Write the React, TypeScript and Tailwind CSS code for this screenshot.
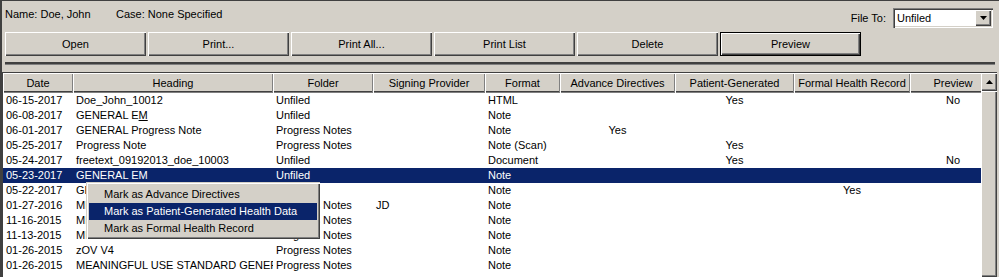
const cols = [
  { label: "Date", cls: "w-[70px]", center: false },
  { label: "Heading", cls: "w-[200px]", center: false },
  { label: "Folder", cls: "w-[100px]", center: false },
  { label: "Signing Provider", cls: "w-[112px]", center: false },
  { label: "Format", cls: "w-[75px]", center: false },
  { label: "Advance Directives", cls: "w-[115px]", center: true },
  { label: "Patient-Generated", cls: "w-[119px]", center: true },
  { label: "Formal Health Record", cls: "w-[116px]", center: true },
  { label: "Preview", cls: "w-[86px]", center: true },
];

const MU = "MEANINGFUL USE STANDARD GENERA";

const rows: string[][] = [
  ["06-15-2017", "Doe_John_10012", "Unfiled", "", "HTML", "", "Yes", "", "No"],
  ["06-08-2017", "GENERAL EM*", "Unfiled", "", "Note", "", "", "", ""],
  ["06-01-2017", "GENERAL Progress Note", "Progress Notes", "", "Note", "Yes", "", "", ""],
  ["05-25-2017", "Progress Note", "Progress Notes", "", "Note (Scan)", "", "Yes", "", ""],
  ["05-24-2017", "freetext_09192013_doe_10003", "Unfiled", "", "Document", "", "Yes", "", "No"],
  ["05-23-2017", "GENERAL EM", "Unfiled", "", "Note", "", "", "", ""],
  ["05-22-2017", "GENERAL EM", "Unfiled", "", "Note", "", "", "Yes", ""],
  ["01-27-2016", MU, "Progress Notes", "JD", "Note", "", "", "", ""],
  ["11-16-2015", MU, "Progress Notes", "", "Note", "", "", "", ""],
  ["11-13-2015", MU, "Progress Notes", "", "Note", "", "", "", ""],
  ["01-26-2015", "zOV V4", "Progress Notes", "", "Note", "", "", "", ""],
  ["01-26-2015", MU, "Progress Notes", "", "Note", "", "", "", ""],
];

const SELECTED = 5;

const raised =
  "shadow-[inset_1px_1px_0_#fff,inset_-1px_-1px_0_#404040,inset_-2px_-2px_0_#808080]";

function WinButton({ label, isDefault }: { label: string; isDefault?: boolean }) {
  return (
    <div
      className={`w-[141px] h-[24px] flex items-center justify-center bg-[#d4d0c8] ${raised} ${
        isDefault ? "border border-black" : ""
      }`}
    >
      {label}
    </div>
  );
}

function Cell({ text, cls, center }: { text: string; cls: string; center: boolean }) {
  const underlined = text.endsWith("*");
  const t = underlined ? text.slice(0, -1) : text;
  return (
    <div
      className={`${cls} shrink-0 overflow-hidden whitespace-nowrap ${
        center ? "text-center" : "pl-[3px]"
      }`}
    >
      {underlined ? (
        <>
          {t.slice(0, -1)}
          <span className="underline">{t.slice(-1)}</span>
        </>
      ) : (
        t
      )}
    </div>
  );
}

export default function App() {
  return (
    <div className="relative w-[999px] h-[277px] overflow-hidden bg-[#d4d0c8] border-t border-l-2 border-[#404040] flex flex-col font-['Liberation_Sans',Arial,sans-serif] text-[11px] text-black">
      {/* patient line + file to */}
      <div className="h-[31px] shrink-0 flex justify-between pl-[3px] pr-[6px]">
        <div className="mt-[6px] leading-[14px] flex">
          <span className="w-[111px]">Name: Doe, John</span>
          <span>Case: None Specified</span>
        </div>
        <div className="mt-[7px] h-[20px] flex items-center">
          <span className="mr-[7px]">File To:</span>
          <div className="w-[100px] h-[20px] bg-white flex items-center justify-between pl-[4px] pr-[2px] shadow-[inset_1px_1px_0_#808080,inset_2px_2px_0_#404040,inset_-1px_-1px_0_#fff,inset_-2px_-2px_0_#d4d0c8]">
            <span>Unfiled</span>
            <div className={`w-[16px] h-[16px] bg-[#d4d0c8] flex items-center justify-center ${raised}`}>
              <svg width="7" height="4" viewBox="0 0 7 4">
                <path d="M0 0h7L3.5 4z" fill="#000" />
              </svg>
            </div>
          </div>
        </div>
      </div>

      {/* buttons */}
      <div className="h-[24px] shrink-0 flex gap-[2px] pl-[3px]">
        <WinButton label="Open" />
        <WinButton label="Print..." />
        <WinButton label="Print All..." />
        <WinButton label="Print List" />
        <WinButton label="Delete" />
        <WinButton label="Preview" isDefault />
      </div>

      {/* splitter */}
      <div className="mt-[6px] ml-[3px] mr-[4px] h-[3px] shrink-0 bg-[#404040] border-b border-[#808080]" />

      {/* list */}
      <div className="mt-[7px] mr-[2px] flex-1 min-h-0 flex border-t border-l border-[#404040]">
        <div className="flex-1 min-w-0 overflow-hidden bg-white">
          <div className="w-[993px]">
            <div className="flex h-[20px] bg-[#d4d0c8]">
              {cols.map((c) => (
                <div
                  key={c.label}
                  className={`${c.cls} shrink-0 flex items-center justify-center whitespace-nowrap shadow-[inset_1px_1px_0_#fff,inset_-1px_-1px_0_#808080,inset_0_-2px_0_#404040]`}
                >
                  {c.label}
                </div>
              ))}
            </div>
            {rows.map((r, i) => (
              <div
                key={i}
                className={`flex h-[15px] leading-[15px] ${
                  i === SELECTED ? "bg-[#0a246a] text-white" : ""
                }`}
              >
                {cols.map((c, j) => (
                  <Cell key={j} text={r[j]} cls={c.cls} center={c.center} />
                ))}
              </div>
            ))}
          </div>
        </div>

        {/* vertical scrollbar */}
        <div className="w-[16px] shrink-0 flex flex-col bg-[#d4d0c8]">
          <div className={`h-[18px] shrink-0 flex items-center justify-center ${raised}`}>
            <svg width="7" height="4" viewBox="0 0 7 4">
              <path d="M3.5 0L7 4H0z" fill="#000" />
            </svg>
          </div>
          <div className={`flex-1 ${raised}`} />
        </div>
      </div>

      {/* context menu */}
      <div className="absolute left-[84px] top-[181px] w-[234px] bg-[#d4d0c8] px-[3px] pt-[4px] pb-[2px] shadow-[inset_1px_1px_0_#d4d0c8,inset_2px_2px_0_#fff,inset_-1px_-1px_0_#404040,inset_-2px_-2px_0_#808080]">
        <div className="h-[17px] leading-[17px] pl-[15px]">Mark as Advance Directives</div>
        <div className="h-[17px] leading-[17px] pl-[15px] bg-[#0a246a] text-white">
          Mark as Patient-Generated Health Data
        </div>
        <div className="h-[17px] leading-[17px] pl-[15px]">Mark as Formal Health Record</div>
      </div>
    </div>
  );
}
